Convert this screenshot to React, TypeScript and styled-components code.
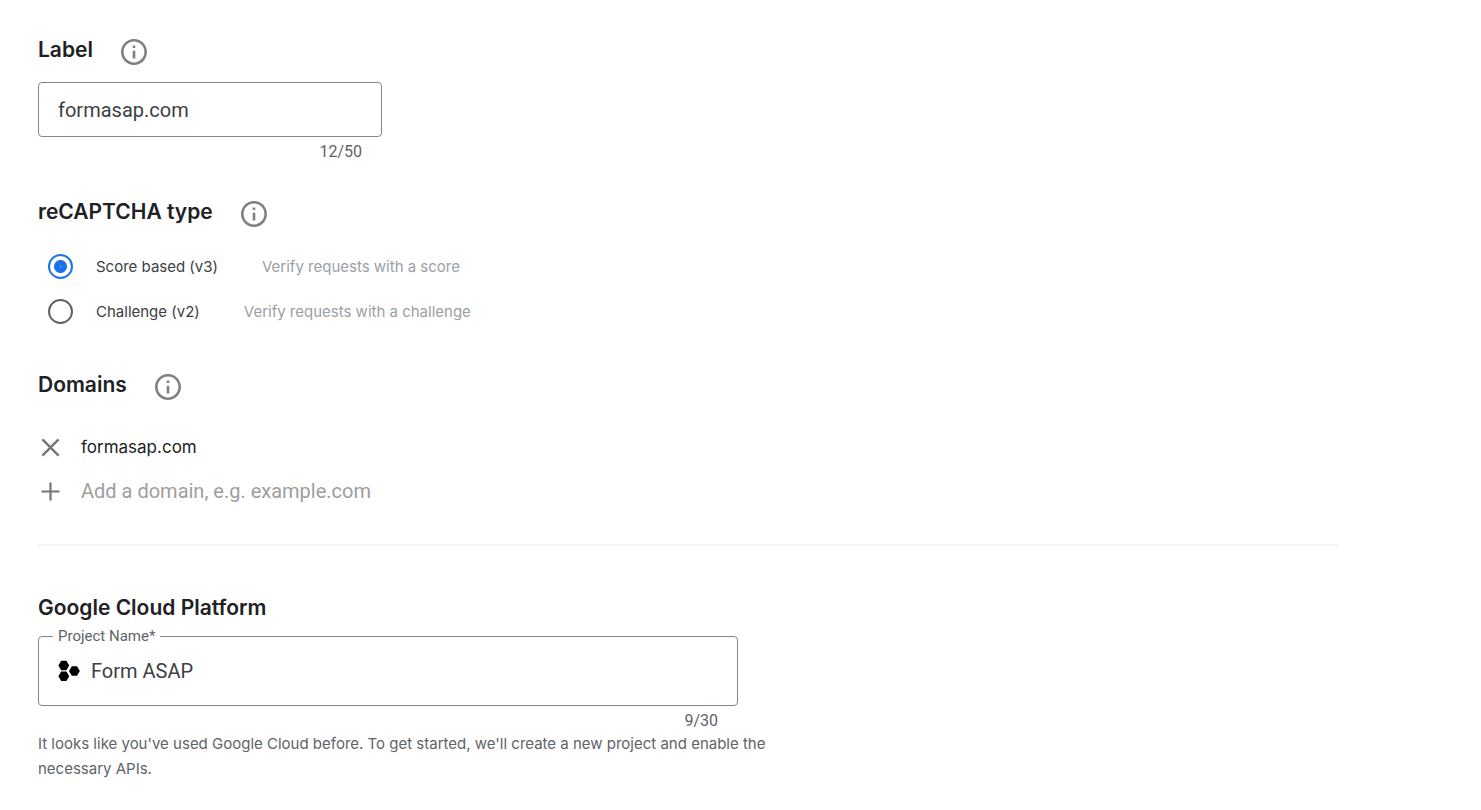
import React, { useState } from 'react';
import styled, { createGlobalStyle } from 'styled-components';

const GlobalStyle = createGlobalStyle`
  *, *::before, *::after { box-sizing: border-box; }
  body {
    margin: 0;
    background: #fff;
    color: #202124;
    font-family: Inter, 'Open Sans', sans-serif;
  }
`;

const Page = styled.main`
  max-width: 1376px;
  padding: 36px 38px 28px;
`;

const Heading = styled.h2`
  margin: 0;
  font-size: 21px;
  line-height: 28px;
  font-weight: 600;

  label { cursor: inherit; }
`;

const HeadingRow = styled.div`
  display: flex;
  align-items: flex-start;
  gap: 28px;
  height: 30px;
`;

const InfoButton = styled.button`
  display: flex;
  margin: 3px 0 0;
  padding: 0;
  border: 0;
  background: none;
  color: #808080;
  cursor: pointer;
`;

const Section = styled.section<{ $gap: number }>`
  margin-top: ${({ $gap }) => $gap}px;
`;

const TextField = styled.div`
  max-width: 344px;
  margin-top: 16px;
`;

const TextInput = styled.input`
  display: block;
  width: 100%;
  height: 55px;
  padding: 0 19px;
  border: 1px solid #80868b;
  border-radius: 4px;
  background: #fff;
  color: #3c4043;
  font: 20px/24px Roboto, sans-serif;
`;

const Counter = styled.div`
  padding: 5px 20px 0 0;
  color: #5f6368;
  font: 16px/20px Roboto, sans-serif;
  text-align: right;
`;

const RadioList = styled.div`
  display: grid;
  gap: 20px;
  margin: 26px 0 0 10px;
`;

const RadioRow = styled.div`
  display: flex;
  align-items: center;
  height: 25px;
  font-size: 15px;
  line-height: 24px;
`;

const Radio = styled.input`
  appearance: none;
  width: 25px;
  height: 25px;
  margin: 0 23px 0 0;
  border: 2px solid #5f6368;
  border-radius: 50%;

  &:checked {
    border-color: #1a73e8;
    background: radial-gradient(circle, #a3c7f7 0, #1a73e8 1px, #1a73e8 6px, #fff 7px);
  }
`;

const RadioLabel = styled.label`
  color: #3c4043;
`;

const Hint = styled.span`
  margin-left: 44px;
  color: #9aa0a6;
`;

const DomainList = styled.ul`
  display: grid;
  gap: 20px;
  margin: 34px 0 0;
  padding: 0;
  list-style: none;
`;

const DomainRow = styled.li`
  display: flex;
  align-items: center;
  gap: 18px;
  height: 24px;
  font-size: 17px;
`;

const IconButton = styled.button`
  display: flex;
  padding: 0;
  border: 0;
  background: none;
  color: #757575;
  cursor: pointer;
`;

const DomainInput = styled.input`
  flex: 1;
  max-width: 400px;
  padding: 0;
  border: 0;
  outline: 0;
  color: #202124;
  font: 20px/24px Roboto, sans-serif;

  &::placeholder { color: #9e9e9e; opacity: 1; }
`;

const Divider = styled.hr`
  height: 2px;
  margin: 41px 0 48px;
  border: 0;
  background: #f1f3f4;
`;

const ProjectField = styled.div`
  max-width: 700px;
`;

const Outline = styled.fieldset`
  min-width: 0;
  margin: 4px 0 0;
  padding: 0 19px;
  border: 1px solid #80868b;
  border-radius: 4px;

  legend {
    margin-left: -5px;
    padding: 0 5px;
    color: #5f6368;
    font: 15px/20px Roboto, sans-serif;
  }
`;

const ProjectValue = styled.div`
  display: flex;
  align-items: center;
  gap: 11px;
  height: 59px;
  padding-bottom: 9px;
`;

const ProjectInput = styled.input`
  flex: 1;
  min-width: 0;
  padding: 0;
  border: 0;
  outline: 0;
  color: #3c4043;
  font: 20px/24px Roboto, sans-serif;
`;

const Note = styled.p`
  max-width: 760px;
  margin: 0;
  color: #5f6368;
  font-size: 15px;
  line-height: 25px;
`;

function Info({ about }: { about: string }) {
  return (
    <InfoButton type="button" aria-label={about}>
      <svg width="26" height="26" viewBox="2 2 20 20" fill="currentColor" aria-hidden="true">
        <path d="M11 7h2v2h-2zm0 4h2v6h-2zm1-9C6.48 2 2 6.48 2 12s4.48 10 10 10 10-4.48 10-10S17.52 2 12 2zm0 18c-4.41 0-8-3.59-8-8s3.59-8 8-8 8 3.59 8 8-3.59 8-8 8z" />
      </svg>
    </InfoButton>
  );
}

function CloseIcon() {
  return (
    <svg width="25" height="25" viewBox="0 0 25 25" stroke="currentColor" strokeWidth="2.4" fill="none" aria-hidden="true">
      <path d="M4.4 4.4l16.2 16.2M20.6 4.4L4.4 20.6" />
    </svg>
  );
}

function PlusIcon() {
  return (
    <svg width="25" height="25" viewBox="0 0 25 25" stroke="currentColor" strokeWidth="2.2" fill="none" aria-hidden="true">
      <path d="M12.5 3.5v18M3.5 12.5h18" />
    </svg>
  );
}

function ProjectIcon() {
  return (
    <svg width="22" height="22" viewBox="0 0 22 22" fill="#000" aria-hidden="true">
      <path d="M3.2 .8h5.200L11.200 5.500 8.400 10.200H3.200L.4 5.500zM3.200 11.600h5.200l2.800 4.700L8.400 21H3.200L.4 16.300zM13.800 6.300H19l2.800 4.700L19 15.700h-5.200L11 11z" />
    </svg>
  );
}

const types = [
  { id: 'v3', label: 'Score based (v3)', hint: 'Verify requests with a score' },
  { id: 'v2', label: 'Challenge (v2)', hint: 'Verify requests with a challenge' },
];

export default function App() {
  const [label, setLabel] = useState('formasap.com');
  const [type, setType] = useState('v3');
  const [project, setProject] = useState('Form ASAP');

  return (
    <>
      <GlobalStyle />
      <Page>
        <section>
          <HeadingRow>
            <Heading><label htmlFor="site-label">Label</label></Heading>
            <Info about="About the label" />
          </HeadingRow>
          <TextField>
            <TextInput id="site-label" type="text" maxLength={50} value={label} onChange={(e) => setLabel(e.target.value)} />
            <Counter>{label.length}/50</Counter>
          </TextField>
        </section>

        <Section $gap={36}>
          <HeadingRow>
            <Heading id="type-heading">reCAPTCHA type</Heading>
            <Info about="About the types" />
          </HeadingRow>
          <RadioList role="radiogroup" aria-labelledby="type-heading">
            {types.map((t) => (
              <RadioRow key={t.id}>
                <Radio type="radio" name="type" id={t.id} checked={type === t.id} onChange={() => setType(t.id)} />
                <RadioLabel htmlFor={t.id}>{t.label}</RadioLabel>
                <Hint>{t.hint}</Hint>
              </RadioRow>
            ))}
          </RadioList>
        </Section>

        <Section $gap={47}>
          <HeadingRow>
            <Heading>Domains</Heading>
            <Info about="About domains" />
          </HeadingRow>
          <DomainList>
            <DomainRow>
              <IconButton type="button" aria-label="Remove domain"><CloseIcon /></IconButton>
              <span>formasap.com</span>
            </DomainRow>
            <DomainRow>
              <IconButton type="button" aria-label="Add domain"><PlusIcon /></IconButton>
              <DomainInput type="text" aria-label="Domain" placeholder="Add a domain, e.g. example.com" />
            </DomainRow>
          </DomainList>
        </Section>

        <Divider />

        <section>
          <Heading>Google Cloud Platform</Heading>
          <ProjectField>
            <Outline>
              <legend><label htmlFor="project">Project Name*</label></legend>
              <ProjectValue>
                <ProjectIcon />
                <ProjectInput id="project" type="text" maxLength={30} value={project} onChange={(e) => setProject(e.target.value)} />
              </ProjectValue>
            </Outline>
            <Counter>{project.length}/30</Counter>
          </ProjectField>
          <Note>
            It looks like you've used Google Cloud before. To get started, we'll create a new project and enable the necessary APIs.
          </Note>
        </section>
      </Page>
    </>
  );
}
